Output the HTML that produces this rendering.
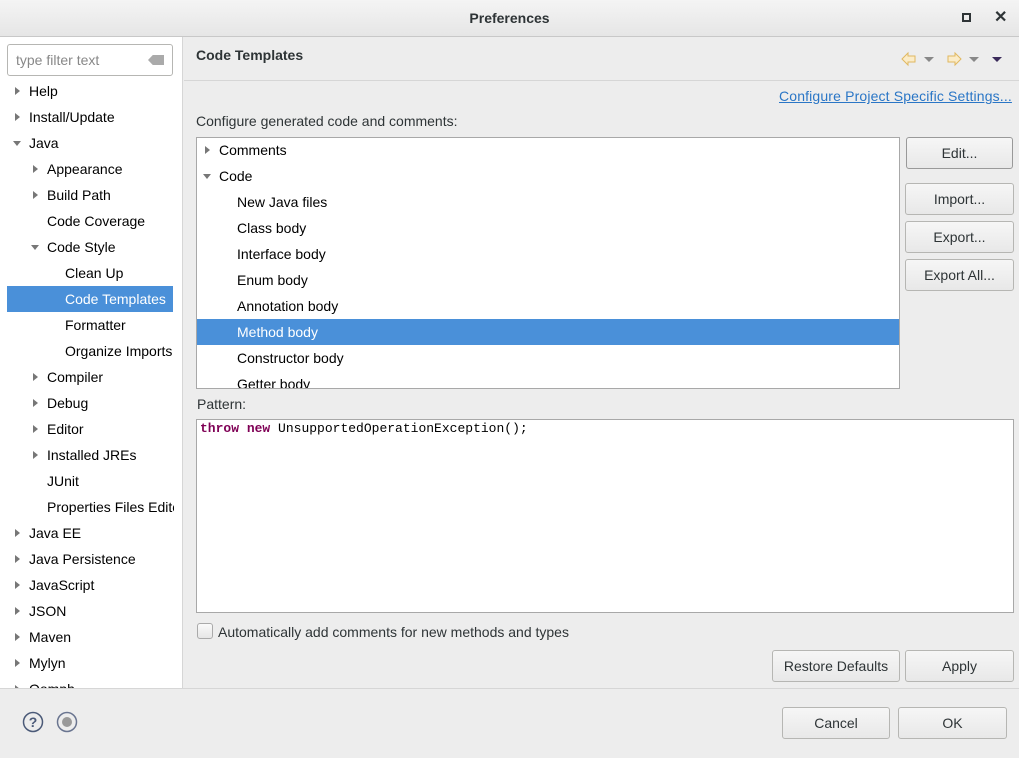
<!DOCTYPE html>
<html><head><style>
*{box-sizing:border-box;margin:0;padding:0}
body{width:1019px;height:758px;overflow:hidden;background:#ededed;font-family:"Liberation Sans",sans-serif;font-size:14px;color:#2e3436;position:relative}
.abs{position:absolute}
.title{left:0;top:0;width:1019px;height:37px;background:linear-gradient(#f4f4f4,#e6e6e6);border-bottom:1px solid #c8c8c8;text-align:center;line-height:36px;font-weight:bold;font-size:14px;color:#2e3436}
.left{left:0;top:37px;width:183px;height:651px;background:#fff;border-right:1px solid #d6d6d6;overflow:hidden}
.row{position:absolute;height:26px;line-height:26px;white-space:nowrap;color:#000}
.tri{position:absolute;width:0;height:0}
.tr{border-top:4px solid transparent;border-bottom:4px solid transparent;border-left:5px solid #777}
.td{border-left:4px solid transparent;border-right:4px solid transparent;border-top:5px solid #777}
.btn{position:absolute;height:32px;border:1px solid #b6b6b3;border-radius:3px;background:linear-gradient(#f6f6f6,#e8e8e8);text-align:center;line-height:30px;color:#2e3436}
.bottom{left:0;top:688px;width:1019px;height:70px;border-top:1px solid #d6d6d6;background:#ededed}
</style></head><body>
<div class="abs title">Preferences</div>
<div class="abs" style="left:962px;top:13px;width:9px;height:9px;border:2px solid #2e3436"></div>
<div class="abs" style="left:994px;top:7px;font-size:16px;font-weight:bold">✕</div>

<div class="abs left">
 <div class="abs" style="left:7px;top:7px;width:166px;height:32px;border:1px solid #b6b6b3;border-radius:3px;background:#fff;color:#888;line-height:30px;padding-left:8px">type filter text</div>
 <div class="abs" style="left:148px;top:18px;width:16px;height:10px;background:#aaa;clip-path:polygon(30% 0,100% 0,100% 100%,30% 100%,0 50%)"></div>
</div>
<div class="abs" style="left:0;top:37px;width:183px;height:651px;overflow:hidden">
 <div class="abs" style="left:7px;top:249px;width:166px;height:26px;background:#4a90d9"></div>
</div>

<div class="abs" style="left:0;top:78px;width:174px;height:610px;overflow:hidden">
 <div class="tri tr" style="left:15px;top:9px"></div><div class="row" style="left:29px;top:0">Help</div>
 <div class="tri tr" style="left:15px;top:35px"></div><div class="row" style="left:29px;top:26px">Install/Update</div>
 <div class="tri td" style="left:13px;top:63px"></div><div class="row" style="left:29px;top:52px">Java</div>
 <div class="tri tr" style="left:33px;top:87px"></div><div class="row" style="left:47px;top:78px">Appearance</div>
 <div class="tri tr" style="left:33px;top:113px"></div><div class="row" style="left:47px;top:104px">Build Path</div>
 <div class="row" style="left:47px;top:130px">Code Coverage</div>
 <div class="tri td" style="left:31px;top:167px"></div><div class="row" style="left:47px;top:156px">Code Style</div>
 <div class="row" style="left:65px;top:182px">Clean Up</div>
 <div class="row" style="left:65px;top:208px;color:#fff">Code Templates</div>
 <div class="row" style="left:65px;top:234px">Formatter</div>
 <div class="row" style="left:65px;top:260px">Organize Imports</div>
 <div class="tri tr" style="left:33px;top:295px"></div><div class="row" style="left:47px;top:286px">Compiler</div>
 <div class="tri tr" style="left:33px;top:321px"></div><div class="row" style="left:47px;top:312px">Debug</div>
 <div class="tri tr" style="left:33px;top:347px"></div><div class="row" style="left:47px;top:338px">Editor</div>
 <div class="tri tr" style="left:33px;top:373px"></div><div class="row" style="left:47px;top:364px">Installed JREs</div>
 <div class="row" style="left:47px;top:390px">JUnit</div>
 <div class="row" style="left:47px;top:416px">Properties Files Editor</div>
 <div class="tri tr" style="left:15px;top:451px"></div><div class="row" style="left:29px;top:442px">Java EE</div>
 <div class="tri tr" style="left:15px;top:477px"></div><div class="row" style="left:29px;top:468px">Java Persistence</div>
 <div class="tri tr" style="left:15px;top:503px"></div><div class="row" style="left:29px;top:494px">JavaScript</div>
 <div class="tri tr" style="left:15px;top:529px"></div><div class="row" style="left:29px;top:520px">JSON</div>
 <div class="tri tr" style="left:15px;top:555px"></div><div class="row" style="left:29px;top:546px">Maven</div>
 <div class="tri tr" style="left:15px;top:581px"></div><div class="row" style="left:29px;top:572px">Mylyn</div>
 <div class="tri tr" style="left:15px;top:607px"></div><div class="row" style="left:29px;top:598px">Oomph</div>
</div>

<div class="abs" style="left:196px;top:47px;font-weight:bold;font-size:14px">Code Templates</div>
<svg class="abs" style="left:898px;top:50px" width="110" height="20">
 <path d="M4 9 L10 3 L10 6 L17 6 L17 12 L10 12 L10 15 Z" fill="#fbecc8" stroke="#e0b860"/>
 <path d="M26 7 L36 7 L31 12Z" fill="#888"/>
 <path d="M63 9 L57 3 L57 6 L50 6 L50 12 L57 12 L57 15 Z" fill="#fbecc8" stroke="#e0b860"/>
 <path d="M71 7 L81 7 L76 12Z" fill="#888"/>
 <path d="M94 7 L104 7 L99 12Z" fill="#3a2a5a"/>
</svg>
<div class="abs" style="left:184px;top:80px;width:835px;height:1px;background:#d6d6d6"></div>
<div class="abs" style="left:779px;top:88px;color:#2a76c6;text-decoration:underline;letter-spacing:0.15px">Configure Project Specific Settings...</div>
<div class="abs" style="left:196px;top:113px">Configure generated code and comments:</div>

<div class="abs" style="left:196px;top:137px;width:704px;height:252px;background:#fff;border:1px solid #a8a8a8;overflow:hidden">
 <div class="abs" style="left:0;top:181px;width:704px;height:26px;background:#4a90d9"></div>
 <div class="tri tr" style="left:8px;top:8px"></div><div class="row" style="left:22px;top:-1px">Comments</div>
 <div class="tri td" style="left:6px;top:36px"></div><div class="row" style="left:22px;top:25px">Code</div>
 <div class="row" style="left:40px;top:51px">New Java files</div>
 <div class="row" style="left:40px;top:77px">Class body</div>
 <div class="row" style="left:40px;top:103px">Interface body</div>
 <div class="row" style="left:40px;top:129px">Enum body</div>
 <div class="row" style="left:40px;top:155px">Annotation body</div>
 <div class="row" style="left:40px;top:181px;color:#fff">Method body</div>
 <div class="row" style="left:40px;top:207px">Constructor body</div>
 <div class="row" style="left:40px;top:233px">Getter body</div>
</div>
<div class="btn" style="left:906px;top:137px;width:107px;border-color:#999">Edit...</div>
<div class="btn" style="left:905px;top:183px;width:109px">Import...</div>
<div class="btn" style="left:905px;top:221px;width:109px">Export...</div>
<div class="btn" style="left:905px;top:259px;width:109px">Export All...</div>

<div class="abs" style="left:197px;top:396px">Pattern:</div>
<div class="abs" style="left:196px;top:419px;width:818px;height:194px;background:#fff;border:1px solid #a8a8a8;font-family:'Liberation Mono',monospace;font-size:13px;padding:1px 3px;color:#000"><b style="color:#7f0055">throw</b> <b style="color:#7f0055">new</b> UnsupportedOperationException();</div>

<div class="abs" style="left:197px;top:623px;width:16px;height:16px;border:1px solid #aaa;border-radius:3px;background:linear-gradient(#fafafa,#e6e6e6)"></div>
<div class="abs" style="left:218px;top:624px">Automatically add comments for new methods and types</div>
<div class="btn" style="left:772px;top:650px;width:128px">Restore Defaults</div>
<div class="btn" style="left:905px;top:650px;width:109px">Apply</div>

<div class="abs bottom"></div>
<svg class="abs" style="left:22px;top:711px" width="60" height="24">
 <circle cx="11" cy="11" r="9.5" fill="none" stroke="#4b5a78" stroke-width="1.5"/>
 <text x="11" y="16" text-anchor="middle" font-family="Liberation Sans" font-weight="bold" font-size="14" fill="#4b5a78">?</text>
 <circle cx="45" cy="11" r="9.5" fill="none" stroke="#6a7590" stroke-width="1.5"/>
 <circle cx="45" cy="11" r="5" fill="#999"/>
</svg>
<div class="btn" style="left:782px;top:707px;width:108px">Cancel</div>
<div class="btn" style="left:898px;top:707px;width:109px">OK</div>
</body></html>
